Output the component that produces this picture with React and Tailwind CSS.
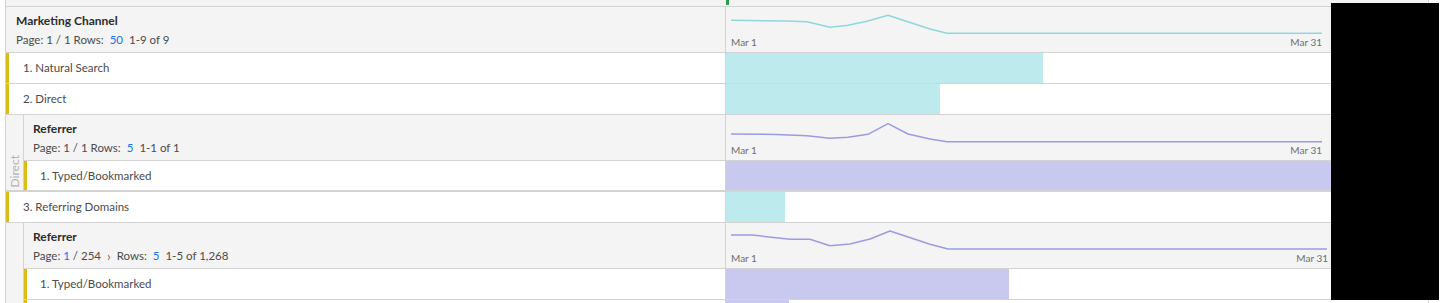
import React from 'react';

const CYAN_LINE = '#8fd7dd';
const PURPLE_LINE = '#9c9be0';

const spark1 = '5,13.3 60,14 81,14.8 104,20.3 122,18.3 141,14.3 162,8.3 204,22 221,26.3 596,26.3';
const spark2 = '5,19 50,19.5 81,20.7 104,23.3 122,22.3 142,19.3 162,8.7 182,19 204,24 221,26.7 596,26.7';
const spark3 = '5,12 26,12 64,16.3 84,16.3 104,22.7 124,21 144,16 164,8 204,21.3 222,26 601,26';

function Sparkline({ points, color, labelPad }) {
    return (
        <div className="w-[605px] flex flex-col">
            <svg width="605" height="30" className="block">
                <polyline points={points} fill="none" stroke={color} strokeWidth="1.5" strokeLinejoin="round" />
            </svg>
            <div className={`flex justify-between pl-[5px] ${labelPad} text-[10px] leading-[10px] text-[#6e6e6e]`}>
                <span>Mar 1</span>
                <span>Mar 31</span>
            </div>
        </div>
    );
}

function Header({ title, children, nested, points, color, labelPad }) {
    return (
        <div className="flex h-[46px] border-b border-[#d3d3d3] bg-[#f4f4f4]">
            <div className={`${nested ? 'w-[701px] pl-[9px]' : 'w-[719px] pl-[10px]'} pt-[7px] leading-[14px]`}>
                <div className="text-[12px] font-bold text-[#2c2c2c]">{title}</div>
                <div className="mt-[5px] text-[11.5px] text-[#4b4b4b] flex items-center gap-[6px]">{children}</div>
            </div>
            <div className="border-l border-[#d3d3d3]">
                <Sparkline points={points} color={color} labelPad={labelPad} />
            </div>
            <div className="flex-1" />
        </div>
    );
}

function Row({ label, nested, bar, color, last }) {
    return (
        <div className={`flex ${last ? 'h-[29px]' : 'h-[31px] border-b border-[#d3d3d3]'} bg-white`}>
            <div className={`${nested ? 'w-[701px] pl-[13px]' : 'w-[719px] pl-[14px]'} border-l-[3px] border-[#d9be15] flex items-center text-[11.5px] text-[#4b4b4b]`}>
                {label}
            </div>
            <div className="w-[606px] border-l border-[#d3d3d3] flex">
                <div className={`h-full ${color}`} style={{ width: bar }} />
            </div>
            <div className="flex-1" />
        </div>
    );
}

function Nested({ gutterLabel, children, thick }) {
    return (
        <div className={`flex ${thick ? 'border-b-2 border-[#d3d3d3]' : ''}`}>
            <div className="w-[18px] shrink-0 bg-[#f4f4f4] border-r border-[#d3d3d3] flex flex-col justify-end items-center pb-[3px]">
                {gutterLabel && (
                    <span className="[writing-mode:vertical-rl] rotate-180 text-[12px] leading-[12px] text-[#b3b3b3]">
                        {gutterLabel}
                    </span>
                )}
            </div>
            <div className="flex-1 flex flex-col">{children}</div>
        </div>
    );
}

export default function App() {
    return (
        <div className="relative w-[1445px] h-[303px] overflow-hidden bg-white" style={{ fontFamily: 'Lato, "Open Sans", sans-serif' }}>
            <div className="ml-[5px] w-[1424px] border-l border-r border-[#d3d3d3]">
                {/* top strip */}
                <div className="relative h-[7px] bg-[#f4f4f4] border-b border-[#d3d3d3]">
                    <div className="absolute left-[720px] top-0 w-[3px] h-[5px] bg-[#2d9d4f]" />
                </div>

                <Header title="Marketing Channel" points={spark1} color={CYAN_LINE} labelPad="pr-[9px]">
                    <span>Page: 1 / 1 Rows:</span>
                    <span className="text-[#1473e6]">50</span>
                    <span>1-9 of 9</span>
                </Header>
                <Row label="1. Natural Search" bar="317px" color="bg-[#bdebed]" />
                <Row label="2. Direct" bar="214px" color="bg-[#bdebed]" />

                <Nested gutterLabel="Direct" thick>
                    <Header title="Referrer" nested points={spark2} color={PURPLE_LINE} labelPad="pr-[9px]">
                        <span>Page: 1 / 1 Rows:</span>
                        <span className="text-[#1473e6]">5</span>
                        <span>1-1 of 1</span>
                    </Header>
                    <Row label="1. Typed/Bookmarked" nested bar="605px" color="bg-[#c9c9f0]" last />
                </Nested>

                <Row label="3. Referring Domains" bar="59px" color="bg-[#bdebed]" />

                <Nested>
                    <Header title="Referrer" nested points={spark3} color={PURPLE_LINE} labelPad="pr-[3px]">
                        <span>
                            Page: <span className="text-[#1473e6]">1</span> / 254
                        </span>
                        <span className="text-[#6e6e6e] text-[13px] leading-[12px]">›</span>
                        <span>Rows:</span>
                        <span className="text-[#1473e6]">5</span>
                        <span>1-5 of 1,268</span>
                    </Header>
                    <Row label="1. Typed/Bookmarked" nested bar="283px" color="bg-[#c9c9f0]" />
                    <Row label="" nested bar="63px" color="bg-[#c9c9f0]" />
                </Nested>
            </div>

            {/* redaction box */}
            <div className="absolute left-[1331px] top-[3px] w-[108px] h-[297px] bg-black" />
        </div>
    );
}
